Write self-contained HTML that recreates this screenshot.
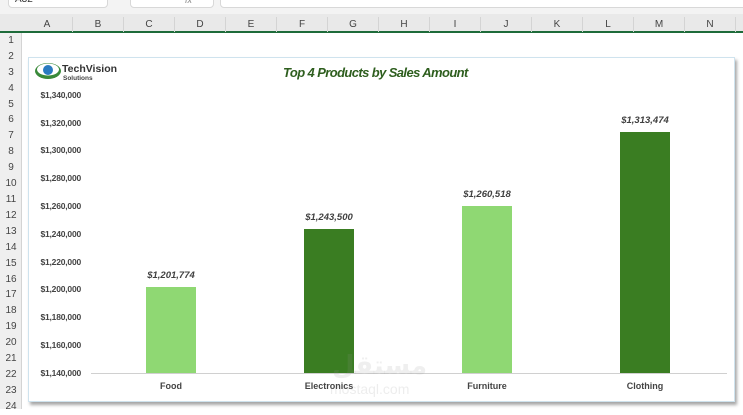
<!DOCTYPE html>
<html><head><style>
*{margin:0;padding:0;box-sizing:border-box}
body{width:743px;height:409px;overflow:hidden;background:#fff;font-family:"Liberation Sans",sans-serif;position:relative}
.a{position:absolute}
.ch{position:absolute;top:17px;height:15px;font-size:10px;color:#444;text-align:center;line-height:15px;border-right:1px solid #d4d4d4}
.rn{position:absolute;left:0;width:22px;font-size:10px;color:#444;text-align:center;height:16px;line-height:16px}
.yl{position:absolute;right:662px;font-size:8.5px;font-weight:bold;color:#444;transform:translateY(-50%);white-space:nowrap;letter-spacing:-0.2px}
.cl{position:absolute;top:381px;font-size:9px;font-weight:bold;color:#444;width:100px;text-align:center}
.dl{position:absolute;font-size:9.5px;font-weight:bold;font-style:italic;color:#404040;width:100px;text-align:center}
</style></head><body>
<div class="a" style="left:0;top:0;width:743px;height:14px;background:#f3f3f3"></div>
<div class="a" style="left:8px;top:-6px;width:100px;height:14px;background:#fff;border:1px solid #d8d8d8;border-radius:4px;font-size:10px;line-height:10px;padding-left:6px;color:#333">A32</div>
<div class="a" style="left:130px;top:-6px;width:84px;height:14px;background:#fff;border:1px solid #d8d8d8;border-radius:4px;font-size:9px;color:#888;padding-left:54px;font-style:italic">fx</div>
<div class="a" style="left:220px;top:-6px;width:530px;height:14px;background:#fff;border:1px solid #d8d8d8;border-radius:4px"></div>
<div class="a" style="left:0;top:14px;width:743px;height:19px;background:#e9e9e9"></div>
<div class="a" style="left:0;top:31px;width:743px;height:2px;background:#1e6b3a"></div>
<div class="a" style="left:0;top:33px;width:22px;height:376px;background:#efefef;border-right:1px solid #d4d4d4"></div>
<div class="ch" style="left:22px;width:51px">A</div><div class="ch" style="left:73px;width:51px">B</div><div class="ch" style="left:124px;width:51px">C</div><div class="ch" style="left:175px;width:51px">D</div><div class="ch" style="left:226px;width:51px">E</div><div class="ch" style="left:277px;width:51px">F</div><div class="ch" style="left:328px;width:51px">G</div><div class="ch" style="left:379px;width:51px">H</div><div class="ch" style="left:430px;width:51px">I</div><div class="ch" style="left:481px;width:51px">J</div><div class="ch" style="left:532px;width:51px">K</div><div class="ch" style="left:583px;width:51px">L</div><div class="ch" style="left:634px;width:51px">M</div><div class="ch" style="left:685px;width:51px">N</div>
<div class="rn" style="top:33px">1</div><div class="rn" style="top:49px">2</div><div class="rn" style="top:65px">3</div><div class="rn" style="top:81px">4</div><div class="rn" style="top:97px">5</div><div class="rn" style="top:112px">6</div><div class="rn" style="top:128px">7</div><div class="rn" style="top:144px">8</div><div class="rn" style="top:160px">9</div><div class="rn" style="top:176px">10</div><div class="rn" style="top:192px">11</div><div class="rn" style="top:208px">12</div><div class="rn" style="top:224px">13</div><div class="rn" style="top:240px">14</div><div class="rn" style="top:256px">15</div><div class="rn" style="top:272px">16</div><div class="rn" style="top:287px">17</div><div class="rn" style="top:303px">18</div><div class="rn" style="top:319px">19</div><div class="rn" style="top:335px">20</div><div class="rn" style="top:351px">21</div><div class="rn" style="top:367px">22</div><div class="rn" style="top:383px">23</div><div class="rn" style="top:399px">24</div>
<div class="a" style="left:28px;top:57px;width:707px;height:345px;background:#fff;border:1px solid #cfe3ee;box-shadow:2px 3px 3px rgba(0,0,0,.35)"></div>
<svg class="a" style="left:34px;top:62px" width="28" height="18" viewBox="0 0 28 18"><ellipse cx="14" cy="9" rx="13" ry="8" fill="#3a8a3a"/><ellipse cx="14" cy="7.5" rx="11" ry="6" fill="#fff"/><circle cx="14" cy="8" r="5" fill="#2a7bc0"/></svg>
<div class="a" style="left:62px;top:63px;font-size:10.5px;font-weight:bold;color:#333">TechVision</div>
<div class="a" style="left:63px;top:75px;font-size:6.5px;font-weight:bold;color:#444">Solutions</div>
<div class="a" style="left:283px;top:65px;font-size:13px;font-weight:bold;font-style:italic;color:#2e5e1e;letter-spacing:-0.6px">Top 4 Products by Sales Amount</div>
<div class="yl" style="top:95px">$1,340,000</div><div class="yl" style="top:123px">$1,320,000</div><div class="yl" style="top:150px">$1,300,000</div><div class="yl" style="top:178px">$1,280,000</div><div class="yl" style="top:206px">$1,260,000</div><div class="yl" style="top:234px">$1,240,000</div><div class="yl" style="top:262px">$1,220,000</div><div class="yl" style="top:289px">$1,200,000</div><div class="yl" style="top:317px">$1,180,000</div><div class="yl" style="top:345px">$1,160,000</div><div class="yl" style="top:373px">$1,140,000</div>
<div class="a" style="left:91px;top:373px;width:636px;height:1px;background:#d0d0d0"></div>
<div class="a" style="left:146px;top:287px;width:50px;height:86px;background:#8fd873"></div>
<div class="a" style="left:304px;top:229px;width:50px;height:144px;background:#3a7d22"></div>
<div class="a" style="left:462px;top:206px;width:50px;height:167px;background:#8fd873"></div>
<div class="a" style="left:620px;top:132px;width:50px;height:241px;background:#3a7d22"></div>
<div class="dl" style="left:121px;top:270px">$1,201,774</div>
<div class="dl" style="left:279px;top:212px">$1,243,500</div>
<div class="dl" style="left:437px;top:189px">$1,260,518</div>
<div class="dl" style="left:595px;top:115px">$1,313,474</div>
<div class="cl" style="left:121px">Food</div><div class="cl" style="left:279px">Electronics</div><div class="cl" style="left:437px">Furniture</div><div class="cl" style="left:595px">Clothing</div>
<div class="a" style="left:332px;top:350px;font-size:26px;font-weight:bold;color:rgba(150,150,150,.15);font-family:'Liberation Sans','DejaVu Sans',sans-serif">مستقل</div>
<div class="a" style="left:330px;top:381px;font-size:14px;color:rgba(150,150,150,.17)">mostaql.com</div>
</body></html>
